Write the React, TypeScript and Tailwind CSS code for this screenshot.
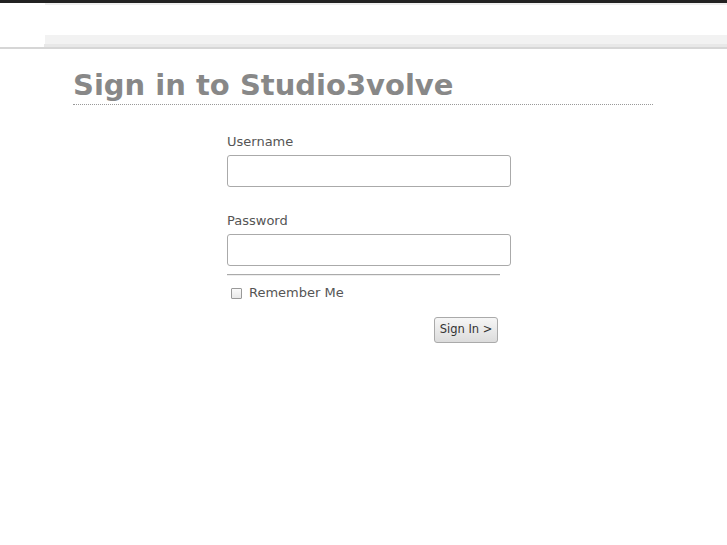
export default function App() {
  return (
    <div className="min-h-[545px] bg-white" style={{ fontFamily: '"DejaVu Sans", sans-serif' }}>
      {/* top bar */}
      <div className="h-[3px] bg-[#222]" />
      <div className="ml-[45px] h-[2px] bg-[#eeeeee]" />
      <div className="h-[30px]" />
      <div className="ml-[45px] h-[9px] bg-[#f2f2f2]" />
      <div className="ml-[44px] h-[3px] bg-[#e8e8e8]" />
      <div className="h-[2px] bg-[#d6d6d6]" />

      <div className="pl-[73px] pr-[74px] pt-[18px]">
        <h1 className="text-[29px] font-bold leading-[36px] text-[#888] border-b border-dotted border-[#999] pb-[1px]">
          Sign in to Studio3volve
        </h1>
      </div>

      <form className="ml-[227px] w-[284px] pt-[29px] text-[13px] text-[#555]" onSubmit={(e) => e.preventDefault()}>
        <label className="block leading-[16px]">Username</label>
        <input
          type="text"
          className="mt-[5px] block h-[32px] w-[284px] rounded-[3px] border border-[#aaa] bg-white px-2 outline-none"
        />
        <label className="mt-[26px] block leading-[16px]">Password</label>
        <input
          type="password"
          className="mt-[5px] block h-[32px] w-[284px] rounded-[3px] border border-[#aaa] bg-white px-2 outline-none"
        />
        <div className="mt-[8px] h-[2px] w-[273px] border-t border-[#aaa] bg-[#eee]" />
        <label className="mt-[9px] flex items-center gap-[7px] pl-[4px] leading-[16px]">
          <span className="inline-block h-[11px] w-[11px] rounded-[1px] border border-[#999] bg-gradient-to-b from-[#fafafa] to-[#e8e8e8]" />
          <span>Remember Me</span>
        </label>
        <div className="mt-[16px] flex w-[271px] justify-end">
          <button
            type="submit"
            className="h-[26px] w-[64px] rounded-[3px] border border-[#aaa] bg-gradient-to-b from-[#f6f6f6] to-[#dcdcdc] text-[11.5px] text-[#333]"
          >
            Sign In &gt;
          </button>
        </div>
      </form>
    </div>
  );
}
